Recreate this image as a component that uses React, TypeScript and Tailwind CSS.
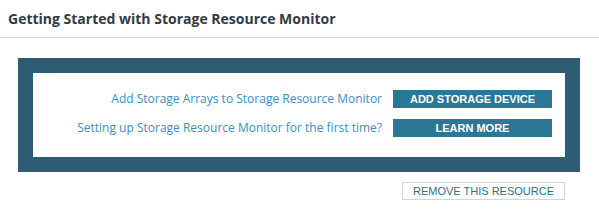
import React from "react";

const rows = [
  { text: "Add Storage Arrays to Storage Resource Monitor", button: "ADD STORAGE DEVICE" },
  { text: "Setting up Storage Resource Monitor for the first time?", button: "LEARN MORE" },
];

const App = () => {
  return (
    <div className="w-[599px] h-[211px] bg-white">
      <div className="h-[38px] border-b border-[#dcdcdc] flex items-center pl-[8px]">
        <h1 className="font-['Open_Sans',sans-serif] font-bold text-[14px] text-[#333a45]">
          Getting Started with Storage Resource Monitor
        </h1>
      </div>

      <div className="mt-[20px] ml-[18px] mr-[19px] border-[15px] border-[#2d5d74] bg-white pt-[17px] pb-[20px] pr-[13px] flex flex-col gap-[11px]">
        {rows.map(row => (
          <div key={row.button} className="flex items-center justify-end gap-[11px]">
            <span className="font-['Open_Sans',sans-serif] text-[12px] text-[#3a8fc0]">{row.text}</span>
            <button className="w-[159px] h-[18px] bg-[#2a7895] text-white font-['Liberation_Sans',Arial,sans-serif] font-bold text-[11px] leading-none">
              {row.button}
            </button>
          </div>
        ))}
      </div>

      <div className="flex justify-end mt-[10px] mr-[34px]">
        <button className="w-[163px] h-[18px] border border-[#d4d4d4] bg-white text-[#2a6f8e] font-['Liberation_Sans',Arial,sans-serif] text-[11px] leading-none">
          REMOVE THIS RESOURCE
        </button>
      </div>
    </div>
  );
};

export default App;
